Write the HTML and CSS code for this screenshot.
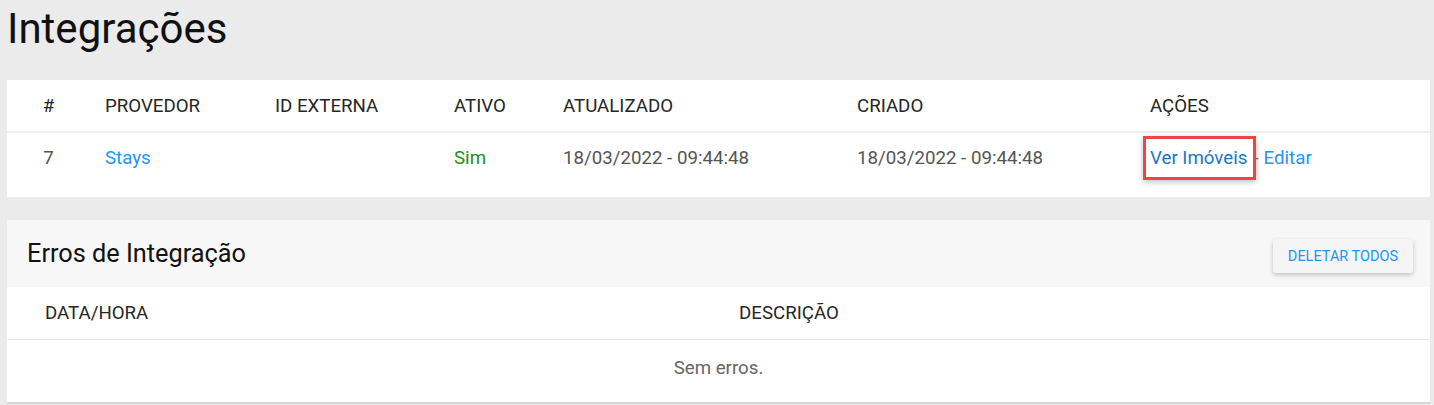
FILE: index.html
```html
<!DOCTYPE html>
<html lang="pt-BR">
<head>
<meta charset="utf-8">
<title>Integrações</title>
<link rel="stylesheet" href="styles.css">
</head>
<body>
<h1 class="page-title">Integrações</h1>

<section class="card">
  <table class="grid">
    <colgroup>
      <col class="c-num"><col class="c-prov"><col class="c-ext"><col class="c-ativo"><col class="c-atual"><col class="c-criado"><col class="c-acoes">
    </colgroup>
    <thead>
      <tr>
        <th class="center">#</th>
        <th>PROVEDOR</th>
        <th>ID EXTERNA</th>
        <th>ATIVO</th>
        <th>ATUALIZADO</th>
        <th>CRIADO</th>
        <th>AÇÕES</th>
      </tr>
    </thead>
    <tbody>
      <tr>
        <td class="center">7</td>
        <td><a class="link" href="#">Stays</a></td>
        <td></td>
        <td class="yes">Sim</td>
        <td>18/03/2022 - 09:44:48</td>
        <td>18/03/2022 - 09:44:48</td>
        <td class="actions"><span class="mark"><a class="link dark" href="#">Ver Imóveis</a></span><span class="sep">-</span><a class="link" href="#">Editar</a></td>
      </tr>
    </tbody>
  </table>
</section>

<section class="card errors">
  <header class="card-head">
    <h2 class="card-title">Erros de Integração</h2>
    <button class="btn" type="button">DELETAR TODOS</button>
  </header>
  <table class="grid grid2">
    <colgroup><col class="c-dh"><col></colgroup>
    <thead>
      <tr><th class="dh">DATA/HORA</th><th>DESCRIÇÃO</th></tr>
    </thead>
    <tbody>
      <tr><td colspan="2" class="empty">Sem erros.</td></tr>
    </tbody>
  </table>
</section>
</body>
</html>
```

FILE: styles.css
```css
html, body {
  margin: 0;
  padding: 0;
  background: #ebebeb;
  font-family: Roboto, "Liberation Sans", Arial, sans-serif;
  font-size: 18.7px;
  color: #555;
}
body {
  padding: 0 4px 0 7px;
}
.page-title {
  margin: 0;
  padding: 3px 0 0 0;
  height: 80px;
  box-sizing: border-box;
  font-size: 42px;
  font-weight: 400;
  color: #111;
  line-height: 52px;
}
.card {
  background: #fff;
}
.grid {
  width: 100%;
  border-collapse: collapse;
  table-layout: fixed;
}
.c-num { width: 83px; }
.c-prov { width: 170px; }
.c-ext { width: 179px; }
.c-ativo { width: 109px; }
.c-atual { width: 294px; }
.c-criado { width: 293px; }
.grid th {
  text-align: left;
  font-weight: 400;
  color: #262626;
  height: 51px;
  padding: 0 0 0 15px;
  border-bottom: 2px solid #eee;
  font-size: 18.7px;
}
.grid td {
  box-sizing: border-box;
  height: 65px;
  padding: 14px 0 0 15px;
  vertical-align: top;
  line-height: 22px;
  font-size: 18.7px;
  color: #555;
}
.grid .center { text-align: center; padding-left: 0; }
.link { color: #2196f3; text-decoration: none; }
.link.dark { color: #1a78c2; }
.grid td.yes { color: #18951a; }
.actions { white-space: nowrap; }
.mark {
  margin-left: -7px;
  padding: 8px 6px 8px 4px;
  border: 3px solid #ee4444;
  box-shadow: 0 2px 6px rgba(0,0,0,0.25);
  position: relative;
  z-index: 1;
}
.sep { color: #777; margin: 0 5px 0 -3px; }
.errors {
  margin-top: 23px;
  border-bottom: 2px solid #d6d6d6;
}
.card-head {
  background: #f7f7f7;
  height: 67px;
  display: flex;
  align-items: center;
  justify-content: space-between;
  padding: 0 17px 0 20px;
}
.card-title {
  margin: 0;
  font-size: 25.3px;
  font-weight: 400;
  color: #111;
}
.btn {
  font-family: inherit;
  font-size: 14.5px;
  color: #2196f3;
  background: #f5f5f5;
  border: none;
  border-radius: 3px;
  width: 140px;
  height: 34px;
  margin-top: 5px;
  box-shadow: 0 2px 5px rgba(0,0,0,0.22);
  padding: 0;
}
.c-dh { width: 717px; }
.grid2 th { height: 52px; border-bottom: 1px solid #e6e6e6; }
.grid2 th.dh { padding-left: 38px; }
.grid2 td.empty { text-align: center; vertical-align: middle; height: 62px; padding: 0 0 6px 0; color: #666; }
```
